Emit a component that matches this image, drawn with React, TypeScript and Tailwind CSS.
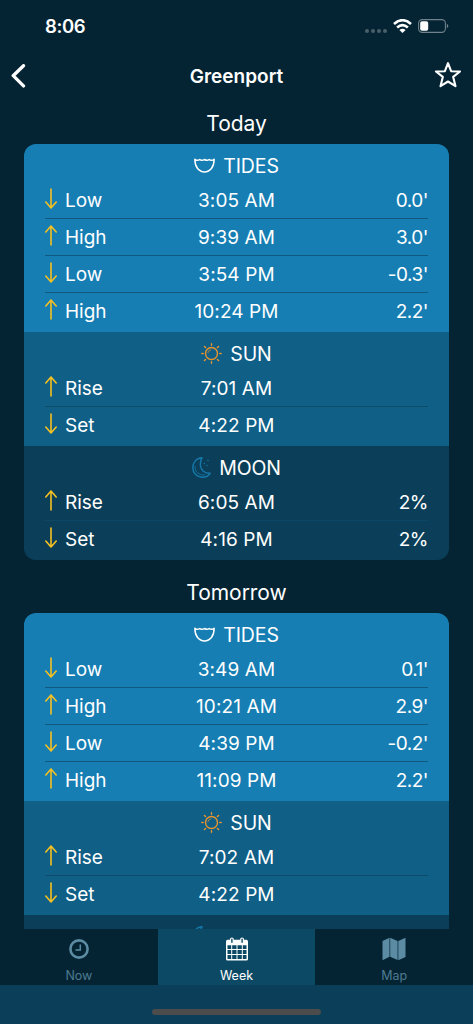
import type { ReactNode } from 'react';

type Direction = 'up' | 'down';

interface Entry {
  label: string;
  direction: Direction;
  time: string;
  value?: string;
}

interface Day {
  title: string;
  tides: Entry[];
  sun: Entry[];
  moon: Entry[];
}

const DAYS: Day[] = [
  {
    title: 'Today',
    tides: [
      { label: 'Low', direction: 'down', time: '3:05 AM', value: "0.0'" },
      { label: 'High', direction: 'up', time: '9:39 AM', value: "3.0'" },
      { label: 'Low', direction: 'down', time: '3:54 PM', value: "-0.3'" },
      { label: 'High', direction: 'up', time: '10:24 PM', value: "2.2'" },
    ],
    sun: [
      { label: 'Rise', direction: 'up', time: '7:01 AM' },
      { label: 'Set', direction: 'down', time: '4:22 PM' },
    ],
    moon: [
      { label: 'Rise', direction: 'up', time: '6:05 AM', value: '2%' },
      { label: 'Set', direction: 'down', time: '4:16 PM', value: '2%' },
    ],
  },
  {
    title: 'Tomorrow',
    tides: [
      { label: 'Low', direction: 'down', time: '3:49 AM', value: "0.1'" },
      { label: 'High', direction: 'up', time: '10:21 AM', value: "2.9'" },
      { label: 'Low', direction: 'down', time: '4:39 PM', value: "-0.2'" },
      { label: 'High', direction: 'up', time: '11:09 PM', value: "2.2'" },
    ],
    sun: [
      { label: 'Rise', direction: 'up', time: '7:02 AM' },
      { label: 'Set', direction: 'down', time: '4:22 PM' },
    ],
    moon: [],
  },
];

function Arrow({ direction }: { direction: Direction }) {
  return (
    <svg
      width="12"
      height="21"
      viewBox="0 0 12 21"
      fill="none"
      stroke="#f5c021"
      strokeWidth="1.6"
      strokeLinecap="round"
      strokeLinejoin="round"
      className={direction === 'down' ? 'rotate-180' : ''}
      aria-hidden="true"
    >
      <path d="M6 20V1M.8 7 6 1l5.2 6" />
    </svg>
  );
}

function TidesIcon() {
  return (
    <svg width="21" height="15" viewBox="0 0 21 15" fill="none" stroke="#fff" strokeWidth="1.5" strokeLinejoin="round" aria-hidden="true">
      <path d="M.9 1.2C.7 9 5 13.900 10.500 13.900S20.300 9 20.100 1.200Q19 2.300 17.600 2.300T15.200 1.500Q14.200 2.300 13 2.300T10.500 1.500Q9.500 2.300 8 2.300T5.800 1.500Q4.800 2.300 3.400 2.300T.9 1.200Z" />
    </svg>
  );
}

function SunIcon() {
  return (
    <svg width="21" height="21" viewBox="0 0 21 21" fill="none" stroke="#e8942c" strokeWidth="1.4" strokeLinecap="round" aria-hidden="true">
      <circle cx="10.5" cy="10.5" r="6" />
      <path d="M6.800 9.800A3.700 3.700 0 0 1 9.800 6.800" strokeWidth=".7" />
      <path d="M10.500.8v1.400M10.500 18.800v1.400M.8 10.500h1.400M18.800 10.500h1.400M3.400 3.400l1.200 1.200M16.400 16.400l1.200 1.200M17.600 3.400l-1.200 1.200M4.600 16.400l-1.200 1.200" />
    </svg>
  );
}

function MoonIcon() {
  return (
    <svg width="19" height="21" viewBox="0 0 19 21" fill="none" stroke="#1679ac" strokeWidth="1.4" strokeLinecap="round" strokeLinejoin="round" aria-hidden="true">
      <path d="M10 .8C4.500 1 .8 5.500.8 10.700.8 16.200 5 20.200 10.200 20.200 13.800 20.200 16.600 18.800 18.200 16.300 12.500 16.500 8.800 13 8.400 8.500 8.100 5.500 8.800 3 10 .8Z" />
      <path d="M3 9.500C2.800 14.500 6.500 18.300 12.500 18" strokeWidth=".8" />
      <path d="M12.300 6.500h.01M16 3.500h.01M15 8.500h.01" strokeWidth="1.4" />
    </svg>
  );
}

interface SectionProps {
  title: string;
  icon: ReactNode;
  entries: Entry[];
  className: string;
  dividerClass: string;
}

function Section({ title, icon, entries, className, dividerClass }: SectionProps) {
  return (
    <section className={`pb-[3px] ${className}`}>
      <h3 className="flex h-[37px] items-center justify-center gap-2 pt-[6px] text-[19.5px] tracking-[-0.1px]">
        {icon}
        <span className="pt-0.5">{title}</span>
      </h3>
      <ul className="mx-[21px]">
        {entries.map((entry, index) => (
          <li
            key={index}
            className={`grid h-[37px] grid-cols-[1fr_120px_1fr] items-center border-t pt-0.5 ${
              index === 0 ? 'border-transparent' : dividerClass
            }`}
          >
            <span className="flex items-center gap-2">
              <span className="-mt-[6px]">
                <Arrow direction={entry.direction} />
              </span>
              {entry.label}
            </span>
            <span className="text-center tracking-[0.1px] whitespace-nowrap">{entry.time}</span>
            <span className="text-right tracking-[-0.5px]">{entry.value}</span>
          </li>
        ))}
      </ul>
    </section>
  );
}

function DayCard({ day }: { day: Day }) {
  return (
    <article className="mb-[9px]">
      <h2 className="flex h-11 items-center justify-center pt-[3px] text-[21px] tracking-[-0.05px]">{day.title}</h2>
      <div className="mx-6 overflow-hidden rounded-xl">
        <Section title="TIDES" icon={<TidesIcon />} entries={day.tides} className="bg-[#167eb3]" dividerClass="border-[#105a80]" />
        <Section title="SUN" icon={<SunIcon />} entries={day.sun} className="bg-[#0f5f87]" dividerClass="border-[#0d4b6a]" />
        <Section title="MOON" icon={<MoonIcon />} entries={day.moon} className="bg-[#0b3f59]" dividerClass="border-[#0c4866]" />
      </div>
    </article>
  );
}

function StatusBar() {
  return (
    <div className="flex h-[52px] shrink-0 items-center justify-between pr-6 pl-[45px]">
      <span className="pt-0.5 text-[18.5px] font-semibold tracking-[-0.4px]">8:06</span>
      <div className="flex items-center">
        <div className="mt-[9px] mr-[6px] flex gap-[2px]">
          <i className="size-1 rounded-full bg-[#4a5f6a]" />
          <i className="size-1 rounded-full bg-[#4a5f6a]" />
          <i className="size-1 rounded-full bg-[#4a5f6a]" />
          <i className="size-1 rounded-full bg-[#4a5f6a]" />
        </div>
        <svg width="19" height="14" viewBox="0 0 19 14" fill="none" stroke="#fff" strokeWidth="2.6" aria-hidden="true">
          <path d="M1 5Q9.500-2.600 18 5M4.100 8.500Q9.500 3.700 14.900 8.500" />
          <path d="M6.400 10.900Q9.500 8.400 12.600 10.900L9.500 13.900Z" fill="#fff" stroke="none" />
        </svg>
        <svg className="ml-[6px]" width="31" height="14" viewBox="0 0 31 14" aria-hidden="true">
          <rect x=".6" y=".6" width="26.800" height="12.800" rx="3.600" fill="none" stroke="#6f818a" strokeWidth="1.1" />
          <rect x="2.200" y="2.200" width="8" height="9.600" rx="1.800" fill="#fff" />
          <path d="M28.800 4.800q1.500.7 1.500 2.200t-1.500 2.200Z" fill="#6f818a" />
        </svg>
      </div>
    </div>
  );
}

function NavBar() {
  return (
    <header className="flex h-12 shrink-0 items-center justify-between px-[11px]">
      <button aria-label="Back" className="w-[28px]">
        <svg width="15" height="24" viewBox="0 0 15 24" fill="none" stroke="#fff" strokeWidth="3.3" strokeLinecap="round" strokeLinejoin="round" aria-hidden="true">
          <path d="M12.500 1.700 2.200 11.700l10.300 10.200" />
        </svg>
      </button>
      <h1 className="pt-0.5 text-[19px] font-semibold tracking-[0px]">Greenport</h1>
      <button aria-label="Add to favorites" className="w-[28px]">
        <svg width="28" height="28" viewBox="0 1 28 28" fill="none" stroke="#fff" strokeWidth="2.1" strokeLinejoin="round" aria-hidden="true">
          <path d="M14 2.200 17.100 10.200 26 10.500 19.200 15.900 21.500 25.200 14 20.500 6.500 25.200 8.800 15.900 2 10.500 10.900 10.200Z" />
        </svg>
      </button>
    </header>
  );
}

function ClockIcon() {
  return (
    <svg width="20" height="20" viewBox="0 0 20 20" fill="none" stroke="currentColor" aria-hidden="true">
      <circle cx="10" cy="10" r="8.6" strokeWidth="2.6" />
      <path d="M11.300 5.500V11H6.500" strokeWidth="1.5" />
    </svg>
  );
}

function CalendarIcon() {
  return (
    <svg width="22" height="24" viewBox="0 0 22 24" aria-hidden="true">
      <rect y="2.800" width="22" height="20.700" rx="1.600" fill="#fff" />
      <path
        fill="#0b4965"
        d="M1.500 8.200h3.700v3.700H1.500zM6.200 8.200h4.300v3.700H6.200zM11.500 8.200h4.300v3.700h-4.300zM16.800 8.200h3.700v3.700h-3.700zM1.500 12.900h3.700v4.100H1.500zM6.200 12.900h4.300v4.100H6.200zM11.500 12.900h4.300v4.100h-4.300zM16.800 12.900h3.700v4.100h-3.700zM1.500 18h3.700v4H1.500zM6.200 18h4.300v4H6.200zM11.500 18h4.300v4h-4.300zM16.800 18h3.700v4h-3.700z"
      />
      <rect x="4.600" y="1" width="2.600" height="5.500" rx="1.300" fill="#0b4965" stroke="#fff" strokeWidth="1.2" />
      <rect x="14.800" y="1" width="2.600" height="5.500" rx="1.300" fill="#0b4965" stroke="#fff" strokeWidth="1.2" />
    </svg>
  );
}

function MapIcon() {
  return (
    <svg width="24" height="24" viewBox="0 0 24 24" fill="currentColor" aria-hidden="true">
      <path d="M.5 4 7.500.8v19L.5 23.200ZM8.200.8l7.400 3.300v19L8.200 19.800ZM16.300 4.100 23.500.8V20l-7.200 3.200Z" />
    </svg>
  );
}

function Tab({ label, icon, active = false }: { label: string; icon: ReactNode; active?: boolean }) {
  return (
    <button
      className={`flex flex-1 flex-col items-center text-[12.5px] leading-4 ${
        active ? 'bg-[#0b4965] text-white' : 'bg-[#052433] text-[#4e7b91]'
      }`}
      aria-current={active ? 'page' : undefined}
    >
      <span className={`flex h-[39px] items-center justify-center ${active ? '' : 'text-[#5c8ca3]'}`}>{icon}</span>
      {label}
    </button>
  );
}

export default function App() {
  return (
    <div className="flex h-[1024px] w-[473px] flex-col overflow-hidden bg-[#052433] font-[Inter,sans-serif] text-[19px] tracking-[0px] text-white">
      <StatusBar />
      <NavBar />
      <main className="min-h-0 flex-1 overflow-hidden">
        {DAYS.map((day) => (
          <DayCard key={day.title} day={day} />
        ))}
      </main>
      <footer className="shrink-0 bg-[#0b3f59]">
        <nav className="flex h-14">
          <Tab label="Now" icon={<ClockIcon />} />
          <Tab label="Week" icon={<CalendarIcon />} active />
          <Tab label="Map" icon={<MapIcon />} />
        </nav>
        <div className="flex h-[39px] justify-center pt-6">
          <div className="h-[6px] w-[169px] rounded-full bg-[#4c4c4d]" />
        </div>
      </footer>
    </div>
  );
}
